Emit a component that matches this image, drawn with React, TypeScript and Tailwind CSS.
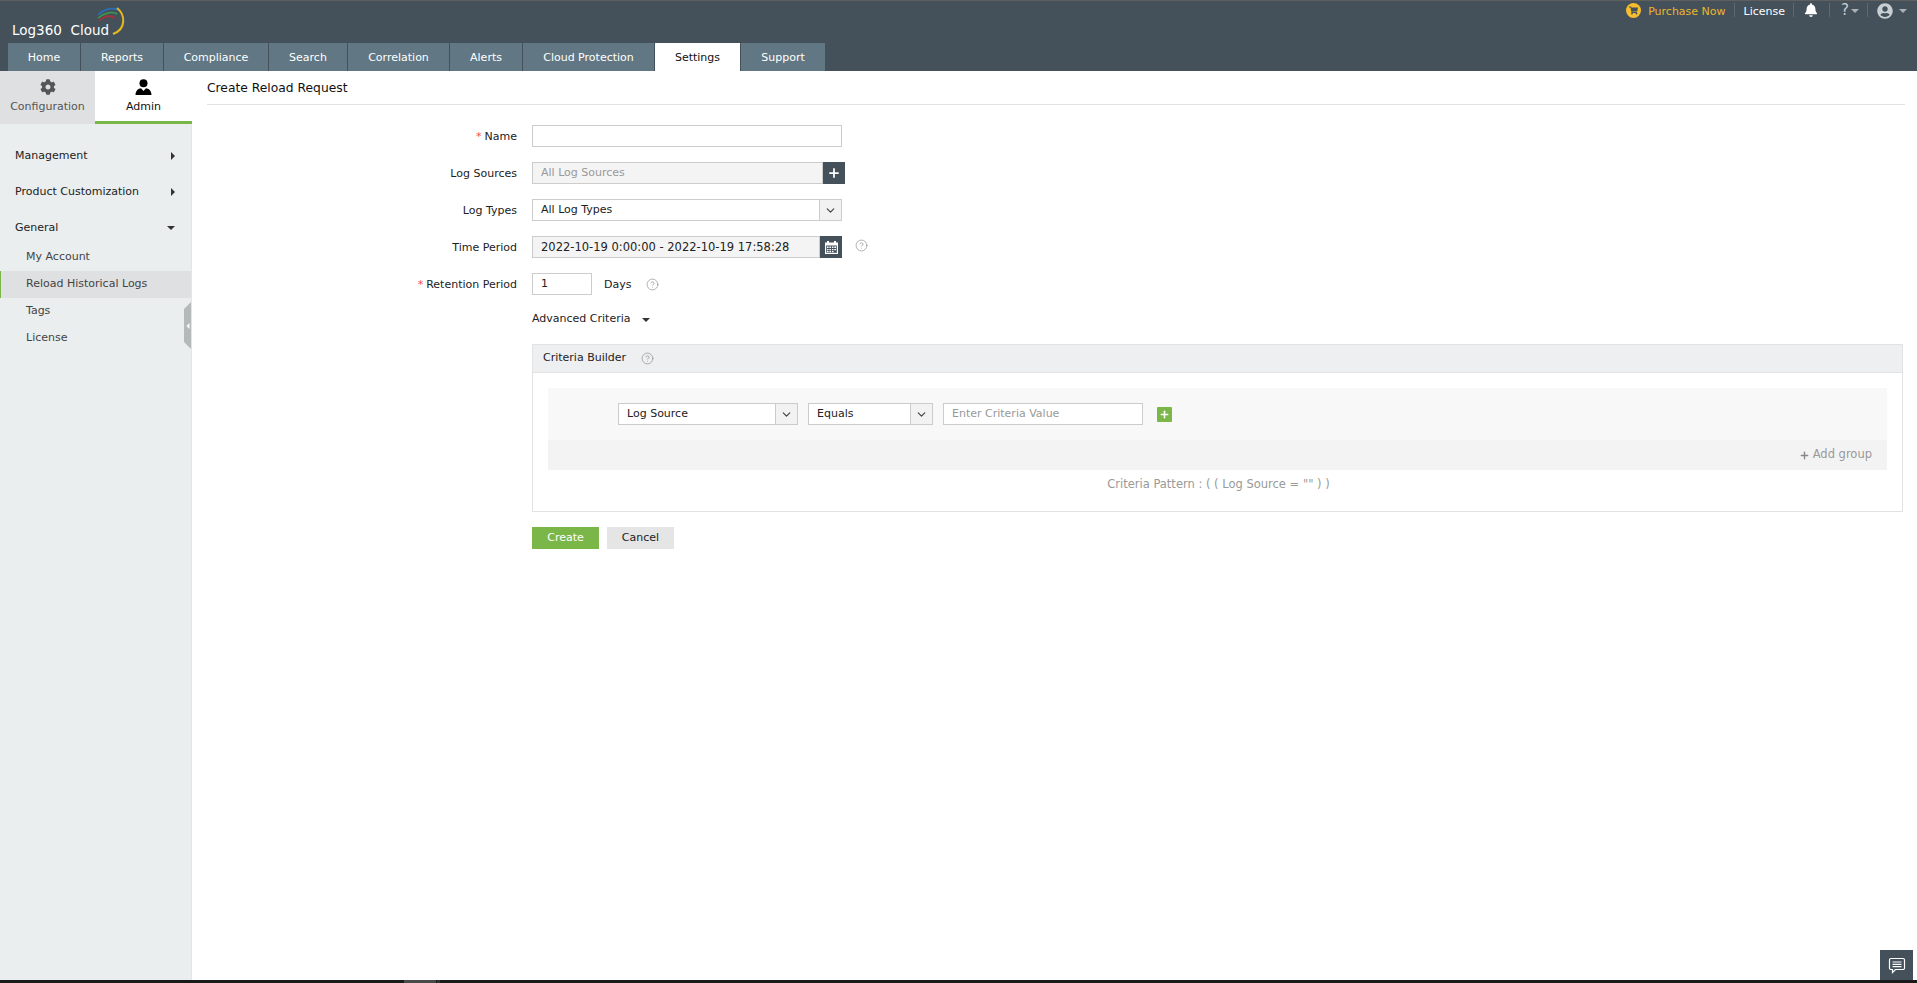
import React from "react";
import { Plus, ChevronDown, CircleHelp } from "lucide-react";
import { FaCog, FaBell, FaUserCircle, FaShoppingCart } from "react-icons/fa";

const font = "[font-family:'DejaVu_Sans',Verdana,sans-serif]";

const tabs = [
  { t: "Home", w: "w-[72px]" },
  { t: "Reports", w: "w-[82px]" },
  { t: "Compliance", w: "w-[104px]" },
  { t: "Search", w: "w-[78px]" },
  { t: "Correlation", w: "w-[101px]" },
  { t: "Alerts", w: "w-[72px]" },
  { t: "Cloud Protection", w: "w-[131px]" },
  { t: "Settings", w: "w-[85px]", active: true },
  { t: "Support", w: "w-[84px]" },
];

function Caret({ dir = "down", cls = "" }: { dir?: "down" | "right"; cls?: string }) {
  return dir === "down" ? (
    <span className={`inline-block w-0 h-0 border-l-[4px] border-r-[4px] border-t-[4px] border-l-transparent border-r-transparent ${cls}`} />
  ) : (
    <span className={`inline-block w-0 h-0 border-t-[4px] border-b-[4px] border-l-[4px] border-t-transparent border-b-transparent ${cls}`} />
  );
}

function Label({ req, children }: { req?: boolean; children: React.ReactNode }) {
  return (
    <div className="w-[325px] shrink-0 pr-[15px] text-right text-[#222] text-[11px] pt-[4px]">
      {req && <span className="text-[#f04b4b] mr-[3px]">*</span>}
      {children}
    </div>
  );
}

function Help({ cls = "" }: { cls?: string }) {
  return <CircleHelp size={13} strokeWidth={1.2} className={`text-[#888] ${cls}`} />;
}

function Select({ text, w }: { text: string; w: string }) {
  return (
    <div className={`${w} h-[22px] border border-[#ccc] bg-white flex items-center text-[11px] text-[#222]`}>
      <span className="flex-1 pl-[8px]">{text}</span>
      <span className="w-[22px] h-full bg-[#f2f2f2] border-l border-[#ccc] flex items-center justify-center">
        <ChevronDown size={13} strokeWidth={2.2} className="text-[#444]" />
      </span>
    </div>
  );
}

export default function App() {
  return (
    <div className={`relative w-[1917px] h-[983px] overflow-hidden flex flex-col bg-white ${font}`}>
      {/* header */}
      <header className="h-[71px] shrink-0 bg-[#44515a] border-t border-[#5f5f5f] flex flex-col">
        <div className="h-[42px] flex justify-between">
          <div className="relative w-[200px]">
            <span className="absolute left-[12px] top-[19px] text-white text-[13.5px] leading-[20px] whitespace-pre">Log360  Cloud</span>
            <svg width="30" height="30" viewBox="0 0 30 30" className="absolute left-[97px] top-[6px]" fill="none">
              <path d="M1 8 C7 2 15 0 21 3" stroke="#2a6fb5" strokeWidth="1.6" />
              <path d="M1 11 C7 6 15 4 20 7" stroke="#3c9e4a" strokeWidth="1.6" />
              <path d="M2 14 C7 9 13 8 18 11" stroke="#a8323a" strokeWidth="1.6" />
              <path d="M20 1 C28 7 30 22 16 27" stroke="#e5b81f" strokeWidth="2" />
            </svg>
          </div>
          <div className="flex items-start pt-[2px] pr-[10px] text-[11px]">
            <span className="w-[15px] h-[15px] rounded-full bg-[#f6bd2f] flex items-center justify-center mr-[7px]">
              <FaShoppingCart size={9} className="text-[#44515a]" />
            </span>
            <span className="text-[#eab72c] mt-[1px]">Purchase Now</span>
            <span className="w-px h-[14px] bg-[#5d6a73] ml-[8px] mr-[9px]" />
            <span className="text-white mt-[1px]">License</span>
            <span className="w-px h-[14px] bg-[#5d6a73] ml-[8px] mr-[10px]" />
            <FaBell size={14} className="text-white" />
            <span className="w-px h-[14px] bg-[#5d6a73] ml-[11px] mr-[11px]" />
            <span className="text-[#c8ced2] text-[15px] leading-[15px]">?</span>
            <Caret cls="border-t-[#a9b1b6] ml-[2px] mt-[6px]" />
            <span className="w-px h-[14px] bg-[#5d6a73] ml-[8px] mr-[9px]" />
            <FaUserCircle size={16} className="text-[#c8ced2]" />
            <Caret cls="border-t-[#a9b1b6] ml-[6px] mt-[6px]" />
          </div>
        </div>
        <nav className="h-[28px] flex pl-[8px] gap-px">
          {tabs.map((x) => (
            <div
              key={x.t}
              className={`${x.w} h-full flex items-center justify-center pt-[3px] text-[11px] ${x.active ? "bg-white text-[#111]" : "bg-[#617784] text-white"}`}
            >
              {x.t}
            </div>
          ))}
        </nav>
      </header>

      <div className="flex-1 flex min-h-0">
        {/* sidebar */}
        <aside className="relative w-[192px] shrink-0 bg-[#eaeeee] border-r border-[#e3e6e6]">
          <div className="flex h-[53px] w-[192px] text-[11px]">
            <div className="w-[95px] bg-[#dfe0e2] flex flex-col items-center pt-[8px] text-[#555]">
              <FaCog size={16} className="text-[#555]" />
              <span className="mt-[4px]">Configuration</span>
            </div>
            <div className="flex-1 bg-white border-b-[3px] border-[#7ab648] flex flex-col items-center pt-[8px] text-[#111]">
              <svg width="17" height="17" viewBox="0 0 17 17" fill="#000">
                <circle cx="8.5" cy="4.2" r="4" />
                <path d="M0.5 16 C0.5 11.5 3.5 9.5 6 9.2 L8.5 12 L11 9.2 C13.5 9.5 16.5 11.5 16.5 16 Z" />
              </svg>
              <span className="mt-[3px]">Admin</span>
            </div>
          </div>
          <div className="pt-[14px] text-[11px] text-[#222]">
            <div className="h-[36px] flex items-center justify-between pl-[15px] pr-[16px]">
              <span>Management</span>
              <Caret dir="right" cls="border-l-[#333]" />
            </div>
            <div className="h-[36px] flex items-center justify-between pl-[15px] pr-[16px]">
              <span>Product Customization</span>
              <Caret dir="right" cls="border-l-[#333]" />
            </div>
            <div className="h-[36px] flex items-center justify-between pl-[15px] pr-[16px]">
              <span>General</span>
              <Caret cls="border-t-[#333]" />
            </div>
            <div className="text-[11px] text-[#444] -mt-[2px]">
              <div className="h-[27px] flex items-center pl-[26px]">My Account</div>
              <div className="h-[27px] flex items-center pl-[25px] bg-[#dfe0e2] border-l border-[#7ab648]">Reload Historical Logs</div>
              <div className="h-[27px] flex items-center pl-[26px]">Tags</div>
              <div className="h-[27px] flex items-center pl-[26px]">License</div>
            </div>
          </div>
          {/* collapse handle */}
          <div className="absolute right-0 top-[231px] w-[7px] h-[47px] bg-[#b4b9b9] [clip-path:polygon(100%_0,100%_100%,0_85%,0_15%)] flex items-center justify-start pl-[2px]">
            <Caret dir="right" cls="border-l-white rotate-180 scale-75" />
          </div>
        </aside>

        {/* main */}
        <main className="flex-1 pl-[15px] pr-[12px]">
          <div className="h-[34px] border-b border-[#e2e2e2] flex items-start pt-[8px] text-[12.3px] text-[#111] leading-[18px]">
            Create Reload Request
          </div>

          <div className="pt-[20px]">
            <div className="flex h-[37px]">
              <Label req>Name</Label>
              <div className="w-[310px] h-[22px] border border-[#ccc] bg-white" />
            </div>
            <div className="flex h-[37px]">
              <Label>Log Sources</Label>
              <div className="w-[291px] h-[22px] border border-[#ccc] bg-[#f4f4f4] text-[11px] text-[#999] flex items-center pl-[8px]">All Log Sources</div>
              <div className="w-[22px] h-[22px] bg-[#44515a] flex items-center justify-center">
                <Plus size={14} strokeWidth={3} className="text-white" />
              </div>
            </div>
            <div className="flex h-[37px]">
              <Label>Log Types</Label>
              <Select text="All Log Types" w="w-[310px]" />
            </div>
            <div className="flex h-[37px]">
              <Label>Time Period</Label>
              <div className="w-[288px] h-[22px] border border-[#ccc] bg-[#f4f4f4] text-[11.5px] text-[#222] flex items-center pl-[8px] pt-px">2022-10-19 0:00:00 - 2022-10-19 17:58:28</div>
              <div className="w-[22px] h-[22px] bg-[#44515a] flex items-center justify-center">
                <svg width="15" height="15" viewBox="0 0 15 15">
                  <path fill="#fff" d="M1 2.500h2V1h2v1.500h5V1h2v1.500h2V14H1z" />
                  <rect x="2.200" y="5.500" width="10.600" height="7.300" fill="#44515a" />
                  <path fill="#fff" d="M3 6.500h1.600v1.400H3zm2.400 0H7v1.400H5.400zm2.500 0h1.600v1.400H7.900zm2.400 0H12v1.400h-1.700zM3 8.900h1.600v1.400H3zm2.400 0H7v1.400H5.400zm2.500 0h1.600v1.400H7.900zm2.400 0H12v1.400h-1.700zM3 11h1.600v1.200H3zm2.400 0H7v1.200H5.400zm2.500 0h1.600v1.200H7.900z" />
                </svg>
              </div>
              <Help cls="ml-[13px] mt-[3px]" />
            </div>
            <div className="flex h-[37px]">
              <Label req>Retention Period</Label>
              <div className="w-[60px] h-[22px] border border-[#ccc] bg-white text-[11px] text-[#222] flex items-center pl-[8px]">1</div>
              <span className="ml-[12px] text-[11px] text-[#222] pt-[4px]">Days</span>
              <Help cls="ml-[15px] mt-[5px]" />
            </div>
            <div className="flex items-center h-[20px] pl-[325px] text-[11px] text-[#222] -mt-[1px]">
              Advanced Criteria
              <Caret cls="border-t-[#333] ml-[11px] mt-[2px]" />
            </div>

            {/* criteria builder */}
            <div className="ml-[325px] mt-[15px] w-[1371px] h-[168px] border border-[#e2e2e2]">
              <div className="h-[28px] bg-[#eeeff0] border-b border-[#e2e2e2] flex items-center pl-[10px] text-[11px] text-[#222]">
                Criteria Builder
                <Help cls="ml-[15px]" />
              </div>
              <div className="mx-[15px] mt-[15px]">
                <div className="h-[52px] bg-[#f8f8f8] flex items-center gap-[10px] pl-[70px]">
                  <Select text="Log Source" w="w-[180px]" />
                  <Select text="Equals" w="w-[125px]" />
                  <div className="w-[200px] h-[22px] border border-[#ccc] bg-white text-[11px] text-[#999] flex items-center pl-[8px]">Enter Criteria Value</div>
                  <div className="ml-[4px] w-[15px] h-[15px] rounded-[1px] bg-[#7ab648] flex items-center justify-center">
                    <Plus size={11} strokeWidth={3.5} className="text-white" />
                  </div>
                </div>
                <div className="h-[30px] bg-[#f3f3f3] flex items-center justify-end pr-[15px] text-[11.5px] text-[#999]">
                  <Plus size={11} strokeWidth={3} className="text-[#888] mr-[3px]" />
                  Add group
                </div>
              </div>
              <div className="text-center text-[11.5px] text-[#999] mt-[6px] pl-[2px]">Criteria Pattern : ( ( Log Source = "" ) )</div>
            </div>

            <div className="flex gap-[8px] mt-[15px] pl-[325px] text-[11px]">
              <div className="w-[67px] h-[22px] bg-[#7ab648] text-white flex items-center justify-center">Create</div>
              <div className="w-[67px] h-[22px] bg-[#e5e5e5] text-[#222] flex items-center justify-center">Cancel</div>
            </div>
          </div>
        </main>
      </div>

      {/* window bottom edge */}
      <div className="h-[3px] shrink-0 bg-[#1a1a1a] flex pl-[404px]">
        <div className="w-[32px] h-full bg-[#4a4a4a]" />
        <div className="ml-px w-[3px] h-full bg-[#333]" />
      </div>

      {/* feedback button */}
      <div className="absolute right-[4px] bottom-[3px] w-[33px] h-[30px] bg-[#44515a] flex items-center justify-center">
        <svg width="18" height="17" viewBox="0 0 18 17" fill="none" stroke="#fff" strokeWidth="1.200">
          <path d="M3 1.500h12a1.500 1.500 0 0 1 1.500 1.500v8a1.500 1.500 0 0 1-1.500 1.500H7.500L4.500 15.500v-3H3A1.500 1.500 0 0 1 1.500 11V3A1.500 1.500 0 0 1 3 1.500z" />
          <path d="M4.500 5h9M4.500 7.300h9M4.500 9.600h9" />
        </svg>
      </div>
    </div>
  );
}
